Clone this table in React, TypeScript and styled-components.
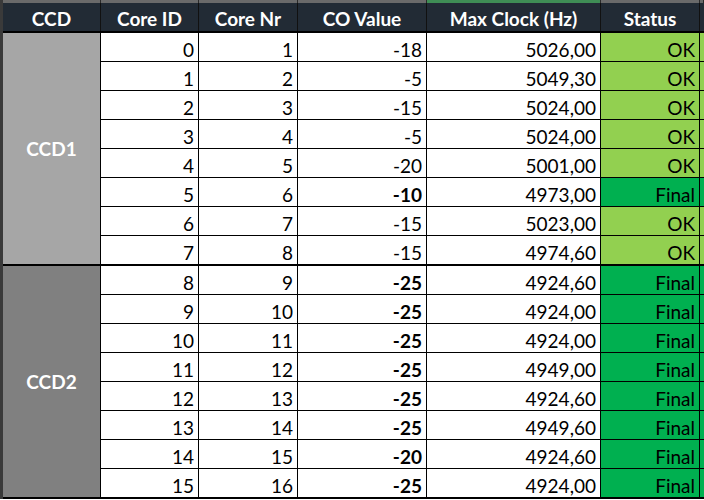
import React from "react";
import styled, { createGlobalStyle } from "styled-components";

const GlobalStyle = createGlobalStyle`
  html, body { margin: 0; padding: 0; background: #ffffff; }
  body { font-family: Lato, "Open Sans", Arial, sans-serif; }
`;

const COLS = "98px 98px 99px 129px 174px 99px 1fr";
const DATA_COLS = "98px 99px 129px 174px 99px 1fr";

const Sheet = styled.div`
  width: 704px;
  border-left: 3px solid #3a3a3a;
  box-sizing: border-box;
`;

const TopStrip = styled.div`
  display: grid;
  grid-template-columns: ${COLS};
  height: 3px;
`;

const StripCell = styled.div<{ $active?: boolean }>`
  background: ${(p) => (p.$active ? "#3f8d55" : "#6a6a6a")};
  border-right: 1px solid #2a2a2a;
`;

const HeaderRow = styled.div`
  display: grid;
  grid-template-columns: ${COLS};
  height: 30px;
  background: #222b35;
  border-bottom: 2px solid #000;
  box-sizing: border-box;
`;

const HeaderCell = styled.div`
  display: flex;
  align-items: center;
  justify-content: center;
  padding-top: 3px;
  box-sizing: border-box;
  color: #ffffff;
  font-weight: 700;
  font-size: 19px;
  border-right: 1px solid #111;
  white-space: nowrap;
`;

const Group = styled.div`
  display: flex;
  border-bottom: 2px solid #000;
`;

const GroupLabel = styled.div<{ $shade: string }>`
  width: 98px;
  flex: none;
  box-sizing: border-box;
  background: ${(p) => p.$shade};
  border-right: 1px solid #000;
  display: flex;
  align-items: center;
  justify-content: center;
  color: #ffffff;
  font-weight: 700;
  font-size: 19px;
`;

const GroupRows = styled.div`
  flex: 1;
  display: flex;
  flex-direction: column;
`;

const Row = styled.div`
  display: grid;
  grid-template-columns: ${DATA_COLS};
  height: 29px;
  box-sizing: border-box;
  border-bottom: 1px solid #000;
  &:last-child {
    height: 28px;
    border-bottom: none;
  }
`;

const Cell = styled.div<{ $bold?: boolean; $bg?: string }>`
  display: flex;
  align-items: center;
  justify-content: flex-end;
  padding: 4px 4px 0 0;
  box-sizing: border-box;
  background: ${(p) => p.$bg || "#ffffff"};
  border-right: 1px solid #000;
  color: #000;
  font-size: 19px;
  font-weight: ${(p) => (p.$bold ? 700 : 400)};
  white-space: nowrap;
`;

const Tail = styled.div<{ $bg: string }>`
  background: ${(p) => p.$bg};
`;

type Core = { id: number; co: number; clock: string; status: "OK" | "Final" };

const cores: Core[] = [
  { id: 0, co: -18, clock: "5026,00", status: "OK" },
  { id: 1, co: -5, clock: "5049,30", status: "OK" },
  { id: 2, co: -15, clock: "5024,00", status: "OK" },
  { id: 3, co: -5, clock: "5024,00", status: "OK" },
  { id: 4, co: -20, clock: "5001,00", status: "OK" },
  { id: 5, co: -10, clock: "4973,00", status: "Final" },
  { id: 6, co: -15, clock: "5023,00", status: "OK" },
  { id: 7, co: -15, clock: "4974,60", status: "OK" },
  { id: 8, co: -25, clock: "4924,60", status: "Final" },
  { id: 9, co: -25, clock: "4924,00", status: "Final" },
  { id: 10, co: -25, clock: "4924,00", status: "Final" },
  { id: 11, co: -25, clock: "4949,00", status: "Final" },
  { id: 12, co: -25, clock: "4924,60", status: "Final" },
  { id: 13, co: -25, clock: "4949,60", status: "Final" },
  { id: 14, co: -20, clock: "4924,60", status: "Final" },
  { id: 15, co: -25, clock: "4924,00", status: "Final" },
];

const groups = [
  { name: "CCD1", shade: "#a6a6a6", cores: cores.slice(0, 8) },
  { name: "CCD2", shade: "#808080", cores: cores.slice(8) },
];

const headers = ["CCD", "Core ID", "Core Nr", "CO Value", "Max Clock (Hz)", "Status"];

const statusColor = (s: Core["status"]) => (s === "OK" ? "#92d050" : "#00b050");

export default function App() {
  return (
    <>
      <GlobalStyle />
      <Sheet>
        <TopStrip>
          {headers.map((h) => (
            <StripCell key={h} $active={h === "Max Clock (Hz)"} />
          ))}
          <StripCell />
        </TopStrip>
        <HeaderRow>
          {headers.map((h) => (
            <HeaderCell key={h}>{h}</HeaderCell>
          ))}
          <div />
        </HeaderRow>
        {groups.map((g) => (
          <Group key={g.name}>
            <GroupLabel $shade={g.shade}>{g.name}</GroupLabel>
            <GroupRows>
              {g.cores.map((c) => {
                const bg = statusColor(c.status);
                const bold = c.status === "Final";
                return (
                  <Row key={c.id}>
                    <Cell>{c.id}</Cell>
                    <Cell>{c.id + 1}</Cell>
                    <Cell $bold={bold}>{c.co}</Cell>
                    <Cell>{c.clock}</Cell>
                    <Cell $bg={bg}>{c.status}</Cell>
                    <Tail $bg={bg} />
                  </Row>
                );
              })}
            </GroupRows>
          </Group>
        ))}
      </Sheet>
    </>
  );
}
